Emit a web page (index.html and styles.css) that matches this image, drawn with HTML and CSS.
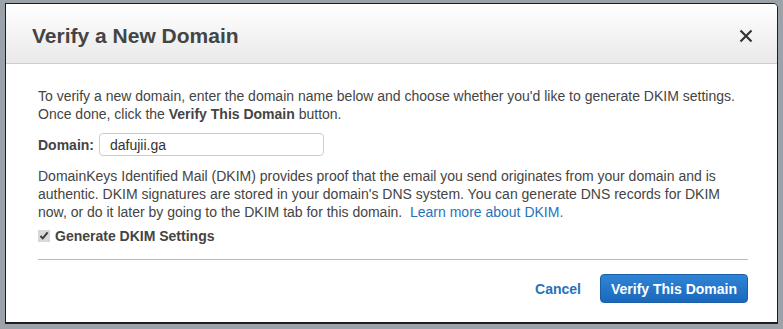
FILE: index.html
```html
<!DOCTYPE html>
<html lang="en">
<head>
  <meta charset="UTF-8" />
  <title>Verify a New Domain</title>
  <link rel="stylesheet" href="styles.css">
</head>
<body>
  <div class="backdrop">
    <div class="modal">
      <div class="modal-header">
        <h2>Verify a New Domain</h2>
        <button class="close" type="button" aria-label="Close">
          <svg width="14" height="14" viewBox="0 0 14 14"><path d="M1.5 1.5 L12.5 12.5 M12.5 1.5 L1.5 12.5" stroke="#333" stroke-width="2.2" fill="none"/></svg>
        </button>
      </div>
      <div class="modal-body">
        <p class="intro">To verify a new domain, enter the domain name below and choose whether you'd like to generate DKIM settings. Once done, click the <b>Verify This Domain</b> button.</p>

        <div class="form-row">
          <label for="domain">Domain:</label>
          <input type="text" id="domain" value="dafujii.ga" />
        </div>

        <p class="dkim">DomainKeys Identified Mail (DKIM) provides proof that the email you send originates from your domain and is authentic. DKIM signatures are stored in your domain's DNS system. You can generate DNS records for DKIM now, or do it later by going to the DKIM tab for this domain.&nbsp; <a href="#">Learn more about DKIM.</a></p>

        <label class="check"><input type="checkbox" checked /> Generate DKIM Settings</label>

        <div class="modal-footer">
          <a href="#" class="cancel">Cancel</a>
          <button type="button" class="btn">Verify This Domain</button>
        </div>
      </div>
    </div>
  </div>
</body>
</html>
```

FILE: styles.css
```css
body {
  margin: 0;
  font-family: Arial, "Liberation Sans", sans-serif;
  background-color: #9ba2a9;
}
.backdrop {
  padding: 3px 5px 0 5px;
}
.modal {
  width: 771px;
  height: 318px;
  background: #fff;
  border: 1px solid #1e1e1e;
  border-bottom-width: 2px;
  border-radius: 0 5px 0 0;
  overflow: hidden;
}
.modal-header {
  height: 60px;
  display: flex;
  align-items: center;
  justify-content: space-between;
  padding: 4px 24px 0 26px;
  box-sizing: border-box;
  background: linear-gradient(#ffffff, #e9e9e9);
  border-bottom: 1px solid #cfcfcf;
}
.modal-header h2 {
  margin: 0;
  font-size: 21px;
  color: #444;
}
.close {
  border: none;
  background: none;
  padding: 0;
  width: 14px;
  height: 14px;
  cursor: pointer;
}
.modal-body {
  padding: 23px 29px 0 32px;
  font-size: 14px;
  color: #444;
  line-height: 18px;
}
.modal-body p {
  margin: 0;
}
.form-row {
  display: flex;
  align-items: center;
  margin: 10px 0 11px 0;
}
.form-row label {
  font-weight: bold;
  margin-right: 5px;
}
.form-row input {
  width: 205px;
  height: 21px;
  padding: 0 8px 0 10px;
  font-family: Arial, "Liberation Sans", sans-serif;
  font-size: 14px;
  color: #333;
  border: 1px solid #ccc;
  border-radius: 4px;
}
a {
  color: #1f73bd;
  text-decoration: none;
}
.check {
  display: flex;
  align-items: center;
  margin-top: 6px;
  font-weight: bold;
}
.check input {
  margin: 0 5px 0 0;
  width: 12px;
  height: 12px;
  accent-color: #d9d9d9;
}
.modal-footer {
  margin-top: 14px;
  border-top: 1px solid #bcbcbc;
  padding-top: 14px;
  display: flex;
  justify-content: flex-end;
  align-items: center;
}
.cancel {
  font-weight: bold;
  margin-right: 19px;
}
.btn {
  width: 148px;
  height: 29px;
  background: linear-gradient(#2f84d6, #1b68bb);
  color: #fff;
  font-family: Arial, "Liberation Sans", sans-serif;
  font-size: 14px;
  font-weight: bold;
  border: 1px solid #1a5fa8;
  border-radius: 4px;
  cursor: pointer;
}
```
